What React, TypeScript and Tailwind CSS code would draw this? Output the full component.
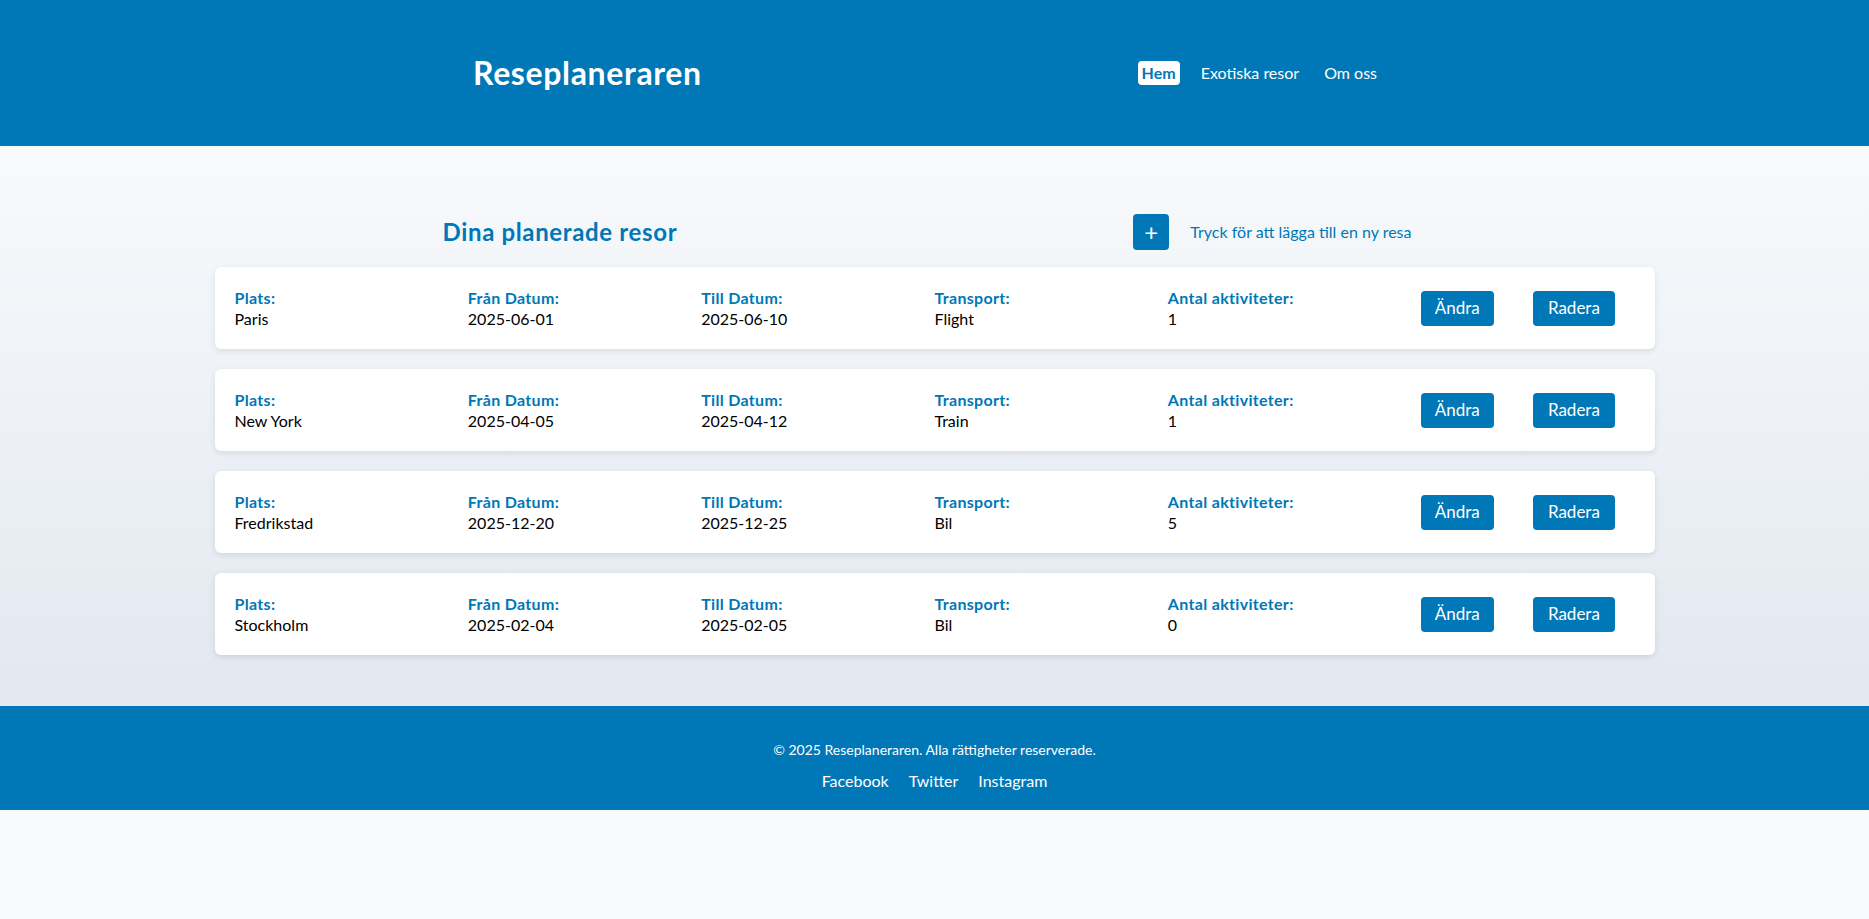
// Reseplaneraren — start page with planned trips
const trips = [
  { id: 1, place: "Paris", from: "2025-06-01", to: "2025-06-10", transport: "Flight", activities: 1 },
  { id: 2, place: "New York", from: "2025-04-05", to: "2025-04-12", transport: "Train", activities: 1 },
  { id: 3, place: "Fredrikstad", from: "2025-12-20", to: "2025-12-25", transport: "Bil", activities: 5 },
  { id: 4, place: "Stockholm", from: "2025-02-04", to: "2025-02-05", transport: "Bil", activities: 0 },
];

function Field({ label, value }: { label: string; value: string | number }) {
  return (
    <div className="flex flex-col">
      <span className="font-bold text-[#0077b6] text-[16px] leading-[21px] tracking-[0.02em]">{label}</span>
      <span className="text-black text-[16px] leading-[22px]">{value}</span>
    </div>
  );
}

export default function App() {
  return (
    <div
      className="min-h-[919px] bg-gradient-to-b from-white to-[#f7f9fc]"
      style={{ fontFamily: '"Segoe UI", Lato, "Open Sans", sans-serif' }}
    >
      {/* Header */}
      <header className="bg-[#0077b6] h-[146px] flex items-center">
        <div className="w-[924px] ml-[473px] flex items-center justify-between">
          <h1 className="text-white font-bold text-[32px] leading-none tracking-[0.02em]">Reseplaneraren</h1>
          <nav className="flex items-center gap-[17px]">
            <a className="bg-white text-[#0077b6] font-bold text-[16px] leading-[24px] px-1 rounded-[4px]">Hem</a>
            <a className="text-white text-[16px] leading-[24px] px-1">Exotiska resor</a>
            <a className="text-white text-[16px] leading-[24px] px-1 mr-[16px]">Om oss</a>
          </nav>
        </div>
      </header>

      {/* Trips */}
      <main className="bg-gradient-to-b from-[#f8fafc] to-[#e2e8f0] pt-[68px] pb-[51px]">
        <div className="w-[1440px] mx-auto">
          <div className="flex items-center justify-around h-9 mb-[17px]">
            <h2 className="text-[#0077b6] font-bold text-[24px] leading-none tracking-[0.027em]">Dina planerade resor</h2>
            <div className="flex items-center gap-[21px] mr-[15px]">
              <button className="w-9 h-9 rounded-[4px] bg-[#0077b6] text-white text-[24px] leading-none flex items-center justify-center">
                +
              </button>
              <span className="text-[#0077b6] text-[16px]">Tryck för att lägga till en ny resa</span>
            </div>
          </div>

          <div className="flex flex-col gap-5">
            {trips.map((t) => (
              <div
                key={t.id}
                className="bg-white rounded-md h-[82px] px-5 grid grid-cols-6 items-center shadow-[0_2px_6px_rgba(0,0,0,0.1)]"
              >
                <Field label="Plats:" value={t.place} />
                <Field label="Från Datum:" value={t.from} />
                <Field label="Till Datum:" value={t.to} />
                <Field label="Transport:" value={t.transport} />
                <Field label="Antal aktiviteter:" value={t.activities} />
                <div className="flex items-center justify-around">
                  <button className="bg-[#0077b6] text-white text-[17px] h-[35px] w-[73px] rounded-[4px]">Ändra</button>
                  <button className="bg-[#0077b6] text-white text-[17px] h-[35px] w-[82px] rounded-[4px]">Radera</button>
                </div>
              </div>
            ))}
          </div>
        </div>
      </main>

      {/* Footer */}
      <footer className="bg-[#0077b6] text-white text-center pt-[34px] pb-[18px]">
        <p className="text-[14px] leading-[20px]">© 2025 Reseplaneraren. Alla rättigheter reserverade.</p>
        <div className="mt-[10px] flex justify-center gap-5 text-[16px] leading-[22px]">
          <a>Facebook</a>
          <a>Twitter</a>
          <a>Instagram</a>
        </div>
      </footer>
    </div>
  );
}
